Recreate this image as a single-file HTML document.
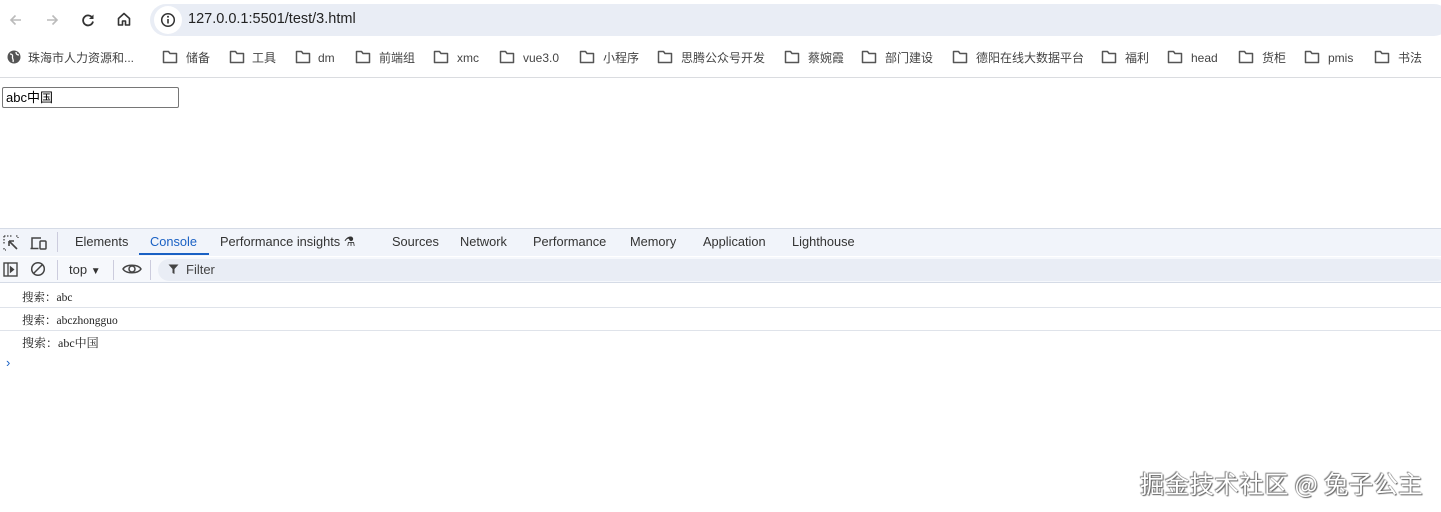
<!DOCTYPE html>
<html><head><meta charset="utf-8"><style>
*{margin:0;padding:0;box-sizing:border-box}
body{width:1441px;height:512px;overflow:hidden;background:#fff;font-family:"Liberation Sans","Noto Sans CJK SC",sans-serif;position:relative;color:#333}
.a{position:absolute;white-space:nowrap}
.bm{position:absolute;top:49px;font-size:12px;color:#444;height:18px;line-height:18px}
.fd{position:absolute;top:50px;width:16px;height:14px}
.tab{position:absolute;top:234px;font-size:12.8px;color:#333}
.log{position:absolute;left:22px;font-size:11.5px;font-family:"Liberation Serif","Noto Serif CJK SC",serif;color:#222}
.sep{position:absolute;left:0;width:1441px;height:1px;background:#dfe3ea}
</style></head><body>
<svg width="0" height="0" style="position:absolute"><defs><symbol id="f" viewBox="0 0 16 14"><path d="M1.5 1.5h5l1.5 2h6.5v9h-13z" stroke="#555" stroke-width="1.5" fill="none" stroke-linejoin="round"/></symbol></defs></svg>
<svg class="a" style="left:8px;top:12px" width="16" height="16" viewBox="0 0 16 16"><path d="M13 8H3M7.5 3.5L3 8l4.5 4.5" stroke="#bbb" stroke-width="1.6" fill="none"/></svg>
<svg class="a" style="left:44px;top:12px" width="16" height="16" viewBox="0 0 16 16"><path d="M3 8h10M8.5 3.5L13 8l-4.5 4.5" stroke="#bbb" stroke-width="1.6" fill="none"/></svg>
<svg class="a" style="left:80px;top:12px" width="16" height="16" viewBox="0 0 16 16"><path d="M12.5 6A5 5 0 1 0 13 9.5" stroke="#333" stroke-width="1.8" fill="none"/><path d="M13.5 2.5v4.5H9z" fill="#333"/></svg>
<svg class="a" style="left:116px;top:11px" width="16" height="16" viewBox="0 0 16 16"><path d="M2.5 7.5L8 2.5l5.5 5V14h-4V10h-3v4h-4z" stroke="#333" stroke-width="1.6" fill="none" stroke-linejoin="round"/></svg>
<div class="a" style="left:150px;top:4px;width:1300px;height:32px;background:#e9edf5;border-radius:16px"></div>
<div class="a" style="left:154px;top:6px;width:28px;height:28px;background:#fff;border-radius:14px"></div>
<svg class="a" style="left:160px;top:12px" width="16" height="16" viewBox="0 0 16 16"><circle cx="8" cy="8" r="6.3" stroke="#333" stroke-width="1.5" fill="none"/><path d="M8 7v4.5" stroke="#333" stroke-width="1.6"/><circle cx="8" cy="4.8" r="1" fill="#333"/></svg>
<div class="a" style="left:188px;top:11px;font-size:14.5px;color:#222">127.0.0.1:5501/test/3.html</div>
<svg class="a" style="left:7px;top:50px" width="14" height="14" viewBox="0 0 14 14"><circle cx="7" cy="7" r="6.5" fill="#555"/><path d="M3 4c2 0 3 1 2.5 3S7 9 6 12M9 2c0 2 1 3 3 3" stroke="#fff" stroke-width="1.3" fill="none"/></svg>
<div class="bm" style="left:28px">珠海市人力资源和...</div>
<svg class="fd" style="left:162px"><use href="#f"/></svg><div class="bm" style="left:186px">储备</div>
<svg class="fd" style="left:229px"><use href="#f"/></svg><div class="bm" style="left:252px">工具</div>
<svg class="fd" style="left:295px"><use href="#f"/></svg><div class="bm" style="left:318px">dm</div>
<svg class="fd" style="left:355px"><use href="#f"/></svg><div class="bm" style="left:379px">前端组</div>
<svg class="fd" style="left:433px"><use href="#f"/></svg><div class="bm" style="left:457px">xmc</div>
<svg class="fd" style="left:499px"><use href="#f"/></svg><div class="bm" style="left:523px">vue3.0</div>
<svg class="fd" style="left:579px"><use href="#f"/></svg><div class="bm" style="left:603px">小程序</div>
<svg class="fd" style="left:657px"><use href="#f"/></svg><div class="bm" style="left:681px">思腾公众号开发</div>
<svg class="fd" style="left:784px"><use href="#f"/></svg><div class="bm" style="left:808px">蔡婉霞</div>
<svg class="fd" style="left:861px"><use href="#f"/></svg><div class="bm" style="left:885px">部门建设</div>
<svg class="fd" style="left:952px"><use href="#f"/></svg><div class="bm" style="left:976px">德阳在线大数据平台</div>
<svg class="fd" style="left:1101px"><use href="#f"/></svg><div class="bm" style="left:1125px">福利</div>
<svg class="fd" style="left:1167px"><use href="#f"/></svg><div class="bm" style="left:1191px">head</div>
<svg class="fd" style="left:1238px"><use href="#f"/></svg><div class="bm" style="left:1262px">货柜</div>
<svg class="fd" style="left:1304px"><use href="#f"/></svg><div class="bm" style="left:1328px">pmis</div>
<svg class="fd" style="left:1374px"><use href="#f"/></svg><div class="bm" style="left:1398px">书法</div>
<div class="a" style="left:0;top:77px;width:1441px;height:1px;background:#dadce0"></div>
<div class="a" style="left:2px;top:87px;width:177px;height:21px;border:1px solid #767676;border-radius:2px;font-size:13px;line-height:19px;padding-left:3px;color:#000">abc中国</div>
<div class="a" style="left:0;top:228px;width:1441px;height:28px;background:#f1f4fa;border-top:1px solid #d5dbe6"></div>
<svg class="a" style="left:3px;top:235px" width="16" height="16" viewBox="0 0 16 16"><path d="M1 1h9M1 1v9M1 13v2h2M13 1h2v2" stroke="#444" stroke-width="1.3" stroke-dasharray="1.5 1.5" fill="none"/><path d="M6 6l8 8M6 6v5M6 6h5" stroke="#444" stroke-width="1.6" fill="none"/></svg>
<svg class="a" style="left:30px;top:235px" width="18" height="16" viewBox="0 0 18 16"><path d="M2 13V3h9M0.5 13.5h8" stroke="#444" stroke-width="1.5" fill="none"/><rect x="10" y="6" width="6" height="8" rx="1" stroke="#444" stroke-width="1.5" fill="none"/></svg>
<div class="a" style="left:57px;top:232px;width:1px;height:20px;background:#ccd"></div>
<div class="tab" style="left:75px">Elements</div>
<div class="tab" style="left:150px;color:#1a61c4">Console</div>
<div class="a" style="left:139px;top:253px;width:70px;height:2px;background:#1a61c4"></div>
<div class="tab" style="left:220px">Performance insights <span style="font-size:13px">⚗</span></div>
<div class="tab" style="left:392px">Sources</div>
<div class="tab" style="left:460px">Network</div>
<div class="tab" style="left:533px">Performance</div>
<div class="tab" style="left:630px">Memory</div>
<div class="tab" style="left:703px">Application</div>
<div class="tab" style="left:792px">Lighthouse</div>
<div class="a" style="left:0;top:256px;width:1441px;height:27px;background:#f6f8fc;border-top:1px solid #fff;border-bottom:1px solid #d5dbe6"></div>
<svg class="a" style="left:3px;top:262px" width="16" height="15" viewBox="0 0 16 15"><rect x="1" y="1" width="13" height="13" stroke="#444" stroke-width="1.4" fill="none"/><path d="M5 1v13M7.5 5l3 2.5-3 2.5z" stroke="#444" stroke-width="1.3" fill="#444"/></svg>
<svg class="a" style="left:30px;top:261px" width="16" height="16" viewBox="0 0 16 16"><circle cx="8" cy="8" r="6.3" stroke="#444" stroke-width="1.5" fill="none"/><path d="M3.5 12.5l9-9" stroke="#444" stroke-width="1.5"/></svg>
<div class="a" style="left:57px;top:260px;width:1px;height:20px;background:#ccd"></div>
<div class="a" style="left:69px;top:262px;font-size:13px;color:#333">top <span style="font-size:10px">▼</span></div>
<div class="a" style="left:113px;top:260px;width:1px;height:20px;background:#ccd"></div>
<svg class="a" style="left:122px;top:262px" width="20" height="14" viewBox="0 0 20 14"><path d="M1 7C4 2 16 2 19 7C16 12 4 12 1 7z" stroke="#444" stroke-width="1.5" fill="none"/><circle cx="10" cy="7" r="3" stroke="#444" stroke-width="1.5" fill="none"/></svg>
<div class="a" style="left:150px;top:260px;width:1px;height:20px;background:#ccd"></div>
<div class="a" style="left:158px;top:259px;width:1290px;height:22px;background:#e9edf5;border-radius:11px"></div>
<svg class="a" style="left:168px;top:264px" width="11" height="11" viewBox="0 0 11 11"><path d="M0.5 0.5h10L6.5 5v5L4.5 9V5z" fill="#444"/></svg>
<div class="a" style="left:186px;top:262px;font-size:13px;color:#444">Filter</div>
<div class="log" style="top:289px">搜索：abc</div>
<div class="sep" style="top:307px"></div>
<div class="log" style="top:312px">搜索：abczhongguo</div>
<div class="sep" style="top:330px"></div>
<div class="log" style="top:334px;font-size:12px">搜索：abc中国</div>
<div class="a" style="left:6px;top:355px;font-size:13px;color:#1a61c4">›</div>
<div class="a" style="left:1140px;top:466px;font-size:24.5px;letter-spacing:0.3px;color:#fff;text-shadow:0 0 1px #555,1px 1px 1px #666,-1px -1px 1px #888;font-family:'Noto Sans CJK SC','Liberation Sans',sans-serif">掘金技术社区 @ 兔子公主</div>
</body></html>
